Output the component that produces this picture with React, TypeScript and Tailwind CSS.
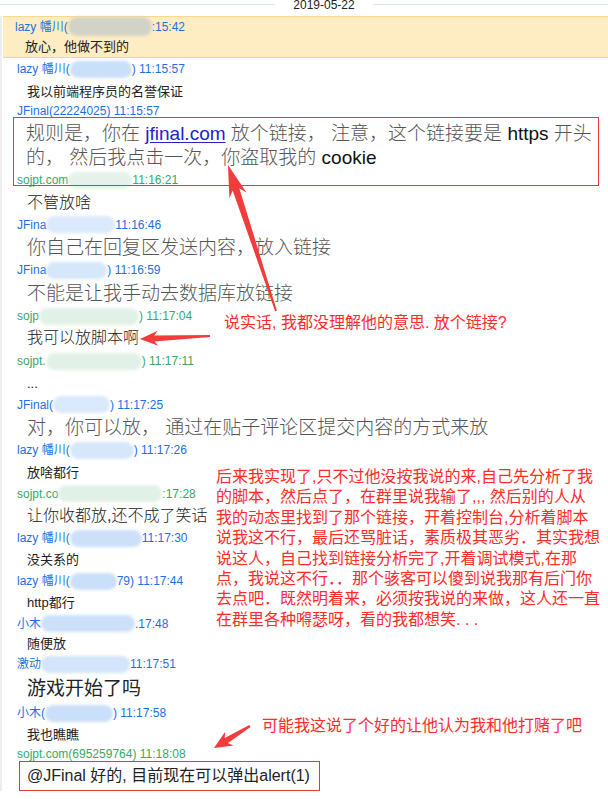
import React from 'react';

/**
 * 聊天记录截图 + 红色标注
 */

type Hdr = { t: 'h'; h: string; c: string; pre: string; blob?: string; suf?: string };
type Msg = { t: 'm'; h: string; cls: string; text: string };
type Special = { t: 'jf' } | { t: 'alert' };
type Row = Hdr | Msg | Special;

const BLUE = 'text-[#1d6fe5]';
const GREEN = 'text-[#36a866]';
const SM = 'text-[13px] text-[#222]';
const MD = 'text-[16px] text-[#222] font-light';
const LG = 'text-[19px] text-[#555] font-light';
const XL = 'text-[19px] text-[#222]';

const rows: Row[] = [
  { t: 'h', h: 'h-[22px]', c: BLUE, pre: 'lazy 幡川(', blob: 'w-[62px] bg-[#cadff9]', suf: ') 11:15:57' },
  { t: 'm', h: 'h-[22px]', cls: SM, text: '我以前端程序员的名誉保证' },
  { t: 'h', h: 'h-[17px]', c: BLUE, pre: 'JFinal(22224025) 11:15:57' },
  { t: 'jf' },
  { t: 'h', h: 'h-[20px]', c: GREEN, pre: 'sojpt.com', blob: 'w-[64px] bg-[#e4f2e9]', suf: '11:16:21' },
  { t: 'm', h: 'h-[25px]', cls: MD, text: '不管放啥' },
  { t: 'h', h: 'h-[19px]', c: BLUE, pre: 'JFina', blob: 'w-[69px] bg-[#dae9fb]', suf: '11:16:46' },
  { t: 'm', h: 'h-[26px]', cls: LG, text: '你自己在回复区发送内容，放入链接' },
  { t: 'h', h: 'h-[20px]', c: BLUE, pre: 'JFina', blob: 'w-[61px] bg-[#d6e6fb]', suf: ') 11:16:59' },
  { t: 'm', h: 'h-[26px]', cls: LG, text: '不能是让我手动去数据库放链接' },
  { t: 'h', h: 'h-[20px]', c: GREEN, pre: 'sojp', blob: 'w-[100px] bg-[#e2f1e7]', suf: ') 11:17:04' },
  { t: 'm', h: 'h-[24px]', cls: MD, text: '我可以放脚本啊' },
  { t: 'h', h: 'h-[22px]', c: GREEN, pre: 'sojpt.', blob: 'w-[96px] bg-[#e2f1e7]', suf: ') 11:17:11' },
  { t: 'm', h: 'h-[23px]', cls: SM, text: '...' },
  { t: 'h', h: 'h-[19px]', c: BLUE, pre: 'JFinal(', blob: 'w-[57px] bg-[#dae9fb]', suf: ') 11:17:25' },
  { t: 'm', h: 'h-[26px]', cls: LG, text: '对，你可以放， 通过在贴子评论区提交内容的方式来放' },
  { t: 'h', h: 'h-[20px]', c: BLUE, pre: 'lazy 幡川(', blob: 'w-[64px] bg-[#d6e6fb]', suf: ') 11:17:26' },
  { t: 'm', h: 'h-[24px]', cls: SM, text: '放啥都行' },
  { t: 'h', h: 'h-[19px]', c: GREEN, pre: 'sojpt.co', blob: 'w-[104px] bg-[#e2f1e7]', suf: ':17:28' },
  { t: 'm', h: 'h-[25px]', cls: MD, text: '让你收都放,还不成了笑话' },
  { t: 'h', h: 'h-[20px]', c: BLUE, pre: 'lazy 幡川(', blob: 'w-[72px] bg-[#cde0fa]', suf: '11:17:30' },
  { t: 'm', h: 'h-[23px]', cls: SM, text: '没关系的' },
  { t: 'h', h: 'h-[20px]', c: BLUE, pre: 'lazy 幡川(', blob: 'w-[47px] bg-[#cadff9]', suf: '79) 11:17:44' },
  { t: 'm', h: 'h-[23px]', cls: SM, text: 'http都行' },
  { t: 'h', h: 'h-[19px]', c: BLUE, pre: '小木', blob: 'w-[94px] bg-[#cde0fa]', suf: '.17:48' },
  { t: 'm', h: 'h-[21px]', cls: SM, text: '随便放' },
  { t: 'h', h: 'h-[20px]', c: BLUE, pre: '激动', blob: 'w-[89px] bg-[#d3e4fb]', suf: '11:17:51' },
  { t: 'm', h: 'h-[29px]', cls: XL, text: '游戏开始了吗' },
  { t: 'h', h: 'h-[20px]', c: BLUE, pre: '小木(', blob: 'w-[68px] bg-[#cadff9]', suf: ') 11:17:58' },
  { t: 'm', h: 'h-[23px]', cls: SM, text: '我也瞧瞧' },
  { t: 'h', h: 'h-[15px]', c: GREEN, pre: 'sojpt.com(695259764) 11:18:08' },
  { t: 'alert' },
];

const notes = [
  '后来我实现了,只不过他没按我说的来,自己先分析了我',
  '的脚本，然后点了，在群里说我输了,,, 然后别的人从',
  '我的动态里找到了那个链接，开着控制台,分析着脚本',
  '说我这不行，最后还骂脏话，素质极其恶劣．其实我想',
  '说这人，自己找到链接分析完了,开着调试模式,在那',
  '点，我说这不行．．那个骇客可以傻到说我那有后门你',
  '去点吧．既然明着来，必须按我说的来做，这人还一直',
  '在群里各种嘚瑟呀，看的我都想笑. . .',
];

// 标注箭头：尾部细，靠近箭头处粗
function arrow(
  tail: [number, number],
  tip: [number, number],
  headLen: number,
  headHalf: number,
  neck: number,
  tailHalf: number,
) {
  const dx = tip[0] - tail[0];
  const dy = tip[1] - tail[1];
  const l = Math.hypot(dx, dy);
  const ux = dx / l;
  const uy = dy / l;
  const nx = -uy;
  const ny = ux;
  const bx = tip[0] - ux * headLen;
  const by = tip[1] - uy * headLen;
  const nkx = tip[0] - ux * headLen * 0.8;
  const nky = tip[1] - uy * headLen * 0.8;
  const p = [
    [tail[0] + nx * tailHalf, tail[1] + ny * tailHalf],
    [nkx + nx * neck, nky + ny * neck],
    [bx + nx * headHalf, by + ny * headHalf],
    tip,
    [bx - nx * headHalf, by - ny * headHalf],
    [nkx - nx * neck, nky - ny * neck],
    [tail[0] - nx * tailHalf, tail[1] - ny * tailHalf],
  ];
  return p.map((q) => `${q[0].toFixed(1)},${q[1].toFixed(1)}`).join(' ');
}

const Header: React.FC<{ r: Hdr }> = ({ r }) => (
  <div className={`flex items-center pl-[15px] whitespace-nowrap text-[12px] leading-none ${r.h} ${r.c}`}>
    <span>{r.pre}</span>
    {r.blob && <span className={`inline-block h-[17px] rounded-full blur-[1.5px] ${r.blob}`} />}
    {r.suf && <span>{r.suf}</span>}
  </div>
);

const App: React.FC = () => {
  return (
    <div className="relative w-[608px] h-[799px] overflow-hidden bg-white font-['Liberation_Sans','Noto_Sans_CJK_SC',sans-serif]">
      {/* 日期分隔线 */}
      <div className="flex h-[16px]">
        <div className="w-[275px] h-px mt-[4px] bg-[#d6e4ef]" />
        <div className="w-[98px] text-center text-[12px] leading-[10px] text-[#222]">2019-05-22</div>
        <div className="flex-1 h-px mt-[4px] bg-[#d6e4ef]" />
      </div>

      <div className="border-l-2 border-[#eeeeee]">
        {/* 高亮消息 */}
        <div className="ml-[1px] bg-[#feecc3] border-y border-[#f8d88b]">
          <div className="flex items-center h-[19px] pl-[12px] whitespace-nowrap text-[12px] leading-none text-[#1d6fe5]">
            <span>lazy 幡川(</span>
            <span className="inline-block w-[84px] h-[19px] rounded-full blur-[1.5px] bg-[#d2d2c6]" />
            <span>:15:42</span>
          </div>
          <div className="flex items-center h-[21px] pl-[22px] text-[13px] leading-none text-[#222]">放心，他做不到的</div>
        </div>

        {rows.map((r, i) => {
          if (r.t === 'h') return <Header key={i} r={r} />;
          if (r.t === 'm')
            return (
              <div key={i} className={`flex items-center pl-[25px] whitespace-nowrap leading-none ${r.h} ${r.cls}`}>
                {r.text}
              </div>
            );
          if (r.t === 'jf')
            return (
              <div key={i} className="h-[51px] pt-[3px] pl-[24px] text-[19px] leading-[24px] whitespace-nowrap text-[#555] font-light">
                规则是，你在{' '}
                <span className="font-['Liberation_Sans'] font-normal text-[#2222cc] underline underline-offset-2">jfinal.com</span>{' '}
                放个链接， 注意，这个链接要是 <span className="font-['Liberation_Sans'] font-normal text-[#111]">https</span> 开头
                <br />
                的， 然后我点击一次，你盗取我的 <span className="font-['Liberation_Sans'] font-normal text-[#111]">cookie</span>
              </div>
            );
          return (
            <div key={i} className="ml-[17px] w-[301px] h-[30px] flex items-center pl-[7px] border border-[#e53935] text-[16px] leading-none text-[#222] whitespace-nowrap">
              @JFinal 好的, 目前现在可以弹出alert(1)
            </div>
          );
        })}
      </div>

      {/* 红色标注层 */}
      <div className="absolute inset-0 pointer-events-none">
        <div className="absolute left-[13px] top-[117px] w-[586px] h-[69px] border border-[#e8383d]" />
        <svg className="absolute inset-0" width="608" height="799" viewBox="0 0 608 799">
          <polygon points={arrow([276, 311], [228, 165], 32, 9, 3.5, 1)} fill="#f23b3b" />
          <polygon points={arrow([210, 336], [140, 339], 18, 7.5, 3, 1)} fill="#f23b3b" />
          <polygon points={arrow([250, 726], [214, 748], 18, 8, 3, 1)} fill="#f23b3b" />
        </svg>
        <div className="absolute left-[224px] top-[313px] text-[16px] leading-[20px] text-[#ff2b2b] whitespace-nowrap">
          说实话, 我都没理解他的意思. 放个链接?
        </div>
        <div className="absolute left-[216px] top-[467px] text-[16px] text-[#ff2b2b]">
          {notes.map((l, i) => (
            <div key={i} className="h-[20.4px] leading-[20.4px] whitespace-nowrap">
              {l}
            </div>
          ))}
        </div>
        <div className="absolute left-[262px] top-[716px] text-[16px] leading-[20px] text-[#ff2b2b] whitespace-nowrap">
          可能我这说了个好的让他认为我和他打赌了吧
        </div>
      </div>
    </div>
  );
};

export default App;
